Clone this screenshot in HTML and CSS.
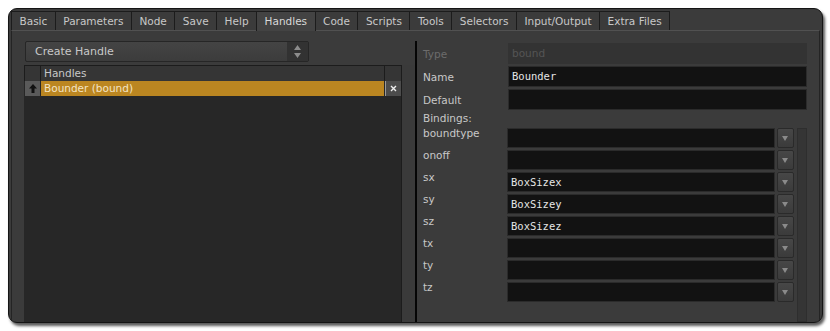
FILE: index.html
```html
<!DOCTYPE html>
<html lang="en">
<head>
  <meta charset="UTF-8" />
  <title>Handles</title>
  <link rel="stylesheet" href="styles.css">
</head>
<body>

  <div class="window">
    <div class="tabs">
      <div class="tab">Basic</div>
      <div class="tab">Parameters</div>
      <div class="tab">Node</div>
      <div class="tab">Save</div>
      <div class="tab">Help</div>
      <div class="tab active">Handles</div>
      <div class="tab">Code</div>
      <div class="tab">Scripts</div>
      <div class="tab">Tools</div>
      <div class="tab">Selectors</div>
      <div class="tab">Input/Output</div>
      <div class="tab">Extra Files</div>
    </div>

    <div class="panel">
      <!-- handle list -->
      <div class="left">
        <div class="combo">
          <span class="combo-text">Create Handle</span>
          <div class="combo-btn">
            <svg width="7" height="13" viewBox="0 0 7 13"><path d="M3.5 0 L7 5 H0 Z M0 8 H7 L3.5 13 Z" fill="#8c8c8c"/></svg>
          </div>
        </div>
        <div class="list">
          <div class="list-main">
            <div class="list-head">
              <div class="cell"></div>
              <div class="cell">Handles</div>
              <div class="cell"></div>
            </div>
            <div class="list-row">
              <div class="cell icon">
                <svg width="8" height="9" viewBox="0 0 8 9"><path d="M4 0 L8 4.5 H5.5 V9 H2.5 V4.5 H0 Z" fill="#111"/></svg>
              </div>
              <div class="cell sel">Bounder (bound)</div>
              <div class="cell del">
                <svg width="7" height="7" viewBox="0 0 7 7"><path d="M1 1 L6 6 M6 1 L1 6" stroke="#eee" stroke-width="1.4"/></svg>
              </div>
            </div>
          </div>
          <div class="list-scroll"></div>
        </div>
      </div>

      <div class="splitter"></div>

      <!-- handle properties -->
      <div class="right">
        <div class="row">
          <span class="label dim">Type</span>
          <div class="field disabled">bound</div>
        </div>
        <div class="row">
          <span class="label">Name</span>
          <div class="field">Bounder</div>
        </div>
        <div class="row">
          <span class="label">Default</span>
          <div class="field"></div>
        </div>
        <div class="bind-head">Bindings:</div>

        <div class="bindings">
          <div class="bind-rows">
            <div class="brow"><span class="label">boundtype</span><div class="field"></div><div class="drop"></div></div>
            <div class="brow"><span class="label">onoff</span><div class="field"></div><div class="drop"></div></div>
            <div class="brow"><span class="label">sx</span><div class="field">BoxSizex</div><div class="drop"></div></div>
            <div class="brow"><span class="label">sy</span><div class="field">BoxSizey</div><div class="drop"></div></div>
            <div class="brow"><span class="label">sz</span><div class="field">BoxSizez</div><div class="drop"></div></div>
            <div class="brow"><span class="label">tx</span><div class="field"></div><div class="drop"></div></div>
            <div class="brow"><span class="label">ty</span><div class="field"></div><div class="drop"></div></div>
            <div class="brow"><span class="label">tz</span><div class="field"></div><div class="drop"></div></div>
          </div>
          <div class="vscroll"></div>
        </div>
      </div>
    </div>
  </div>

</body>
</html>
```

FILE: styles.css
```css
:root {
  --bg: #3b3b3b;
  --dark: #1c1c1c;
  --text: #c8c8c8;
  --field: #121212;
  --accent: #bb8621;
}

* {
  margin: 0; padding: 0; box-sizing: border-box;
  font-family: 'DejaVu Sans', sans-serif;
}

body {
  background: #fff;
  width: 830px;
  height: 331px;
  overflow: hidden;
}

.window {
  margin: 8px 0 0 8px;
  width: 815px;
  height: 315px;
  background: var(--bg);
  border: 1px solid #151515;
  border-radius: 9px;
  box-shadow: 2px 3px 3px rgba(0, 0, 0, 0.65);
  padding: 2px 2px 0 2px;
  display: flex;
  flex-direction: column;
  overflow: hidden;
  font-size: 10.5px;
  color: var(--text);
}

/* tabs */
.tabs {
  display: flex;
  height: 19px;
}

.tab {
  height: 19px;
  line-height: 18px;
  padding: 0 7.5px;
  border: 1px solid var(--dark);
  border-bottom: none;
  margin-right: -1px;
  white-space: nowrap;
}

.tab.active {
  background: #434343;
  color: #d8d8d8;
  height: 20px;
  position: relative;
  z-index: 1;
}

.panel {
  flex: 1;
  display: flex;
  border-top: 1px solid #515151;
  border-left: 1px solid #242424;
  border-right: 1px solid #242424;
  padding: 10px 0 0 12px;
  min-height: 0;
}

/* left side */
.left {
  width: 391px;
  display: flex;
  flex-direction: column;
}

.combo {
  margin-left: 1px;
  width: 284px;
  height: 21px;
  display: flex;
  border: 1px solid #262626;
  border-radius: 2px;
  background: linear-gradient(#444, #3c3c3c);
}

.combo-text {
  flex: 1;
  padding-left: 9px;
  line-height: 19px;
  font-size: 11px;
}

.combo-btn {
  width: 21px;
  background: #323232;
  display: flex;
  align-items: center;
  justify-content: center;
}

.list {
  flex: 1;
  margin-top: 3px;
  display: flex;
}

.list-main {
  flex: 1;
  background: #272727;
}

.list-head, .list-row {
  display: grid;
  grid-template-columns: 15px 1fr 16px;
  gap: 1px;
}

.list-head {
  height: 16px;
  padding: 1px 0 0 1px;
  background: var(--dark);
}

.list-head .cell {
  background: #353535;
  line-height: 15px;
  padding-left: 3px;
}

.list-row {
  height: 15px;
  padding-left: 1px;
}

.list-row .cell {
  line-height: 15px;
}

.icon {
  background: #5a5a5a;
  display: flex;
  align-items: center;
  justify-content: center;
}

.sel {
  background: var(--accent);
  color: #f3e4c4;
  padding-left: 3px;
}

.del {
  background: #4c4c4c;
  border-left: 1px solid #9a9a9a;
  display: flex;
  align-items: center;
  justify-content: center;
}

.list-scroll {
  width: 14px;
  border-left: 1px solid var(--dark);
  background: #3a3a3a;
}

.splitter {
  width: 2px;
  background: #050505;
}

/* right side */
.right {
  flex: 1;
  padding: 2px 12px 0 6px;
  display: flex;
  flex-direction: column;
  gap: 2px;
}

.row {
  display: flex;
  align-items: center;
  height: 21px;
}

.label {
  width: 85px;
  flex-shrink: 0;
}

.label.dim {
  color: #6c6c6c;
}

.field {
  flex: 1;
  height: 100%;
  background: var(--field);
  border: 1px solid #2b2b2b;
  font-family: 'DejaVu Sans Mono', monospace;
  font-size: 10.5px;
  color: #e6e6e6;
  padding-left: 3px;
  line-height: 18px;
}

.field.disabled {
  background: #333;
  border-color: #333;
  color: #555;
  font-family: 'DejaVu Sans', sans-serif;
}

.bind-head {
  height: 14px;
  line-height: 13px;
}

.bindings {
  flex: 1;
  display: flex;
  gap: 3px;
}

.bind-rows {
  flex: 1;
  display: flex;
  flex-direction: column;
  gap: 2px;
}

.brow {
  display: flex;
  height: 20px;
  gap: 2px;
}

.brow .label {
  width: 82px;
  line-height: 11px;
}

.brow .field {
  line-height: 18px;
}

.drop {
  width: 17px;
  border: 1px solid #2a2a2a;
  border-radius: 2px;
  background: linear-gradient(#474747, #3b3b3b);
  position: relative;
}

.drop::after {
  content: "";
  position: absolute;
  left: 4px;
  top: 7px;
  border-left: 3.5px solid transparent;
  border-right: 3.5px solid transparent;
  border-top: 5px solid #8a8a8a;
}

.vscroll {
  width: 10px;
  background: #353535;
  border: 1px solid #2e2e2e;
}
```
